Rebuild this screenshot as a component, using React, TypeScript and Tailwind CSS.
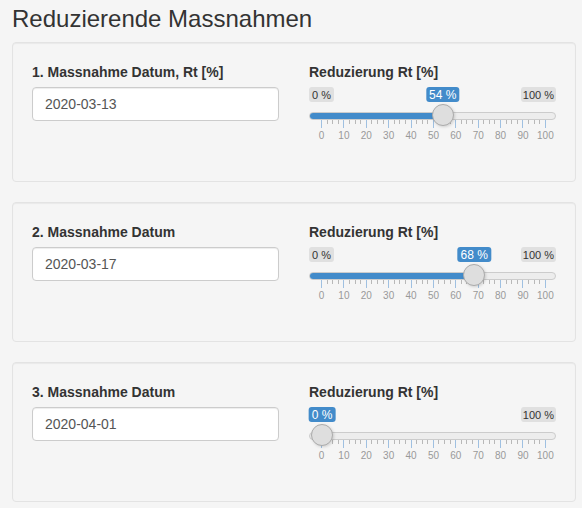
import React from 'react';

const measures = [
  { label: '1. Massnahme Datum, Rt [%]', date: '2020-03-13', value: 54 },
  { label: '2. Massnahme Datum', date: '2020-03-17', value: 68 },
  { label: '3. Massnahme Datum', date: '2020-04-01', value: 0 },
];

// grid runs from 12.5px to 237px inside the 247px wide slider
const GRID_START = 12.5;
const GRID_SPAN = 224.5;
const ticks = Array.from({ length: 41 }, (_, i) => i * 2.5);

const Slider = ({ value }: { value: number }) => {
  const center = GRID_START + (value / 100) * GRID_SPAN;

  return (
    <div className="relative h-[60px] w-full text-[10px]">
      <div className="flex h-[15px] justify-between text-[11px]">
        <span className={`rounded-[3px] bg-[#e0e0e0] px-[3px] pt-[1px] leading-[14px] text-[#333] ${value > 5 ? '' : 'invisible'}`}>
          0 %
        </span>
        <span className="rounded-[3px] bg-[#e0e0e0] px-[2px] pt-[1px] leading-[14px] text-[#333]">100 %</span>
      </div>

      <div className="mt-[10px] h-[8px] overflow-hidden rounded-full border border-[#cccccc] bg-[#ededed]">
        <div className="h-full bg-[#428bca]" style={{ width: value > 0 ? center : 0 }} />
      </div>

      <div className="ml-[12px] mr-[10px] flex h-[8px] items-start justify-between">
        {ticks.map((t) => (
          <div
            key={t}
            className={t % 10 === 0 ? 'h-[8px] w-px bg-[#9fc0e1]' : 'h-[4px] w-px bg-[#b8b8b8]'}
          />
        ))}
      </div>

      <div className="ml-[12px] mr-[10px] mt-[2px] flex justify-between">
        {ticks
          .filter((t) => t % 10 === 0)
          .map((t) => (
            <div key={t} className="flex w-px justify-center whitespace-nowrap leading-[12px] text-[#999]">
              {t}
            </div>
          ))}
      </div>

      <span
        className="absolute top-0 -translate-x-1/2 whitespace-nowrap rounded-[3px] bg-[#428bca] px-[3px] pt-[1px] text-[12px] leading-[14px] text-white"
        style={{ left: Math.max(center, 13) }}
      >
        {value} %
      </span>
      <div
        className="absolute top-[17px] h-[22px] w-[22px] rounded-full border border-[#ababab] bg-[#dedede] shadow-[1px_1px_3px_rgba(0,0,0,0.15)]"
        style={{ left: center - 11 }}
      />
    </div>
  );
};

export default function App() {
  return (
    <div className="min-h-screen bg-[#f5f5f5] pl-[12px] pr-[6px] pt-[6px] font-['Liberation_Sans',Arial,sans-serif] text-[14px] text-[#333]">
      <h3 className="mb-[10px] text-[24px] font-normal leading-[1.1]">Reduzierende Massnahmen</h3>

      {measures.map((m) => (
        <div
          key={m.label}
          className="mb-[20px] h-[140px] rounded-[4px] border border-[#e3e3e3] bg-[#f5f5f5] px-[19px] pt-[19px] shadow-[inset_0_1px_1px_rgba(0,0,0,0.05)]"
        >
          <div className="grid grid-cols-2 gap-x-[30px]">
            <div>
              <label className="mb-[5px] block text-[14px] font-bold leading-[20px]">{m.label}</label>
              <div className="flex h-[34px] items-center rounded-[4px] border border-[#cccccc] bg-white px-[12px] text-[14px] text-[#555] shadow-[inset_0_1px_1px_rgba(0,0,0,0.075)]">
                {m.date}
              </div>
            </div>
            <div>
              <label className="mb-[5px] block text-[14px] font-bold leading-[20px]">Reduzierung Rt [%]</label>
              <Slider value={m.value} />
            </div>
          </div>
        </div>
      ))}
    </div>
  );
}
